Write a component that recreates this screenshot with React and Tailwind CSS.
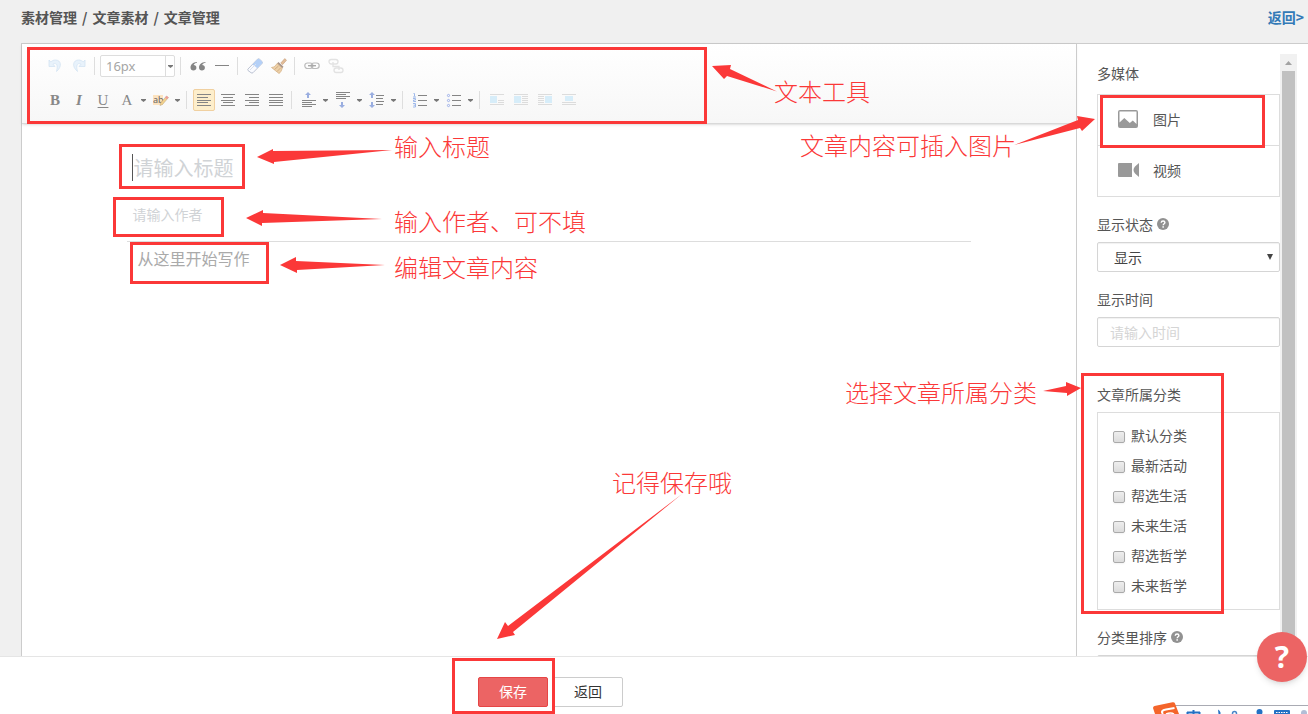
import { useState } from 'react';

const CATEGORIES = ['默认分类', '最新活动', '帮选生活', '未来生活', '帮选哲学', '未来哲学'];

const BOXES = [
  [27, 47, 680, 77],
  [119, 144, 126, 45],
  [113, 197, 111, 40],
  [130, 242, 139, 42],
  [1100, 95, 165, 53],
  [1081, 373, 143, 241],
  [452, 658, 103, 56],
];

const ARROWS = [
  '712,66 731,65 730,69 777,91.5 727,76 724,79',
  '257,157 273,149 273,151 392,150 274,162 274,164',
  '246,218 263,210 263,213 382,219 262,223 262,226',
  '280,265 296,257 296,261 385,265 297,270 297,273',
  '1095,119 1077,116 1078,120 1014,145 1080,128 1082,131',
  '1081,388 1066,382 1066,386 1043,391 1067,393 1067,396',
  '497,639 505,622 508,626 682,494 513,632 515,635',
];

const NOTES = [
  { text: '文本工具', pos: 'left-[774px] top-[75px]' },
  { text: '文章内容可插入图片', pos: 'left-[800px] top-[129px]' },
  { text: '输入标题', pos: 'left-[394px] top-[130px]' },
  { text: '输入作者、可不填', pos: 'left-[394px] top-[205px]' },
  { text: '编辑文章内容', pos: 'left-[394px] top-[251px]' },
  { text: '选择文章所属分类', pos: 'left-[845px] top-[376px]' },
  { text: '记得保存哦', pos: 'left-[612px] top-[466px]' },
];

function Icon({ children }) {
  return (
    <svg width="16" height="16" viewBox="0 0 16 16" fill="none" className="shrink-0">
      {children}
    </svg>
  );
}

// each line is [x, y, width]
function Lines({ rows, color = '#858585' }) {
  return rows.map(([x, y, w]) => <rect key={`${x}-${y}`} x={x} y={y} width={w} height="1" fill={color} />);
}

function Tool({ label, active, children }) {
  return (
    <button
      type="button"
      aria-label={label}
      title={label}
      className={`mx-px flex h-[22px] w-[22px] items-center justify-center rounded-xs border ${active ? 'border-[#f0d0a0] bg-[#fdeecb]' : 'border-transparent'}`}
    >
      {children}
    </button>
  );
}

function SplitTool({ label, children }) {
  return (
    <div className="flex w-[34px] items-center">
      <Tool label={label}>{children}</Tool>
      <button type="button" aria-label={`${label}选项`} className="flex h-[22px] w-2 items-center justify-center">
        <svg width="5" height="3" viewBox="0 0 5 3" className="shrink-0"><path d="M0 0h5v1L2.500 3L0 1z" fill="#777" /></svg>
      </button>
    </div>
  );
}

function Separator() {
  return <div className="ml-[3px] mr-[5px] h-[18px] w-px bg-[#dedede]" />;
}

function Letter({ children, className }) {
  return <span className={`font-['Liberation_Serif',serif] text-[15px] leading-4 text-[#888] ${className}`}>{children}</span>;
}

function UpArrow({ x = 6, y = 0 }) {
  return <path d={`M${x} ${y}l3 3h-2v3h-2v-3h-2z`} fill="#9aaee0" />;
}

function DownArrow({ x = 6, y = 16 }) {
  return <path d={`M${x} ${y}l3-3h-2v-3h-2v3h-2z`} fill="#9aaee0" />;
}

function Toolbar() {
  return (
    <div className="flex flex-col gap-3 border-b border-[#d9d9d9] bg-linear-to-b from-white to-[#f7f7f7] pt-[11px] pb-[12px] pl-[21px] shadow-sm">
      <div className="flex h-[22px] items-center">
        <Tool label="撤销">
          <Icon><path d="M2 2v6.500h6L6 6.300C9 4.300 11.500 6.500 9.500 13.500 15.500 8.500 14 2 8.500 2 6.500 2 5 2.800 3.800 4z" fill="#e8f2fb" stroke="#d3e3f2" strokeWidth=".8" /></Icon>
        </Tool>
        <Tool label="重做">
          <Icon><path d="M14 2v6.500H8L10 6.300C7 4.300 4.500 6.500 6.500 13.500.5 8.500 2 2 7.500 2c2 0 3.500.8 4.700 2z" fill="#e8f2fb" stroke="#d3e3f2" strokeWidth=".8" /></Icon>
        </Tool>
        <Separator />
        <button type="button" aria-label="字号" className="mr-[2px] flex h-[22px] w-[75px] items-stretch rounded-xs border border-[#ddd] bg-white">
          <span className="flex flex-1 items-center pt-px pl-[5px] font-['Noto_Sans',sans-serif] text-[13px] text-[#a5a5a5]">16px</span>
          <span className="flex w-[9px] items-center justify-center border-l border-[#ddd]">
            <svg width="5" height="3" viewBox="0 0 5 3" className="shrink-0"><path d="M0 0h5v1L2.500 3L0 1z" fill="#777" /></svg>
          </span>
        </button>
        <Separator />
        <Tool label="引用">
          <Icon>
            <path d="M7 4C3 4.300.5 6.500.5 9.500c0 1.800 1.200 3 2.900 3 1.700 0 3-1.100 3-2.800 0-1.600-1.100-2.600-2.800-2.600C4.200 5.900 5.300 5 7 4.700z" fill="#858585" />
            <path d="M15.500 4c-4 .3-6.500 2.500-6.500 5.500 0 1.800 1.200 3 2.900 3 1.700 0 3-1.100 3-2.800 0-1.600-1.100-2.600-2.800-2.600.6-1.200 1.700-2.100 3.400-2.400z" fill="#858585" />
          </Icon>
        </Tool>
        <Tool label="分隔线"><Icon><Lines rows={[[1, 7, 14]]} /></Icon></Tool>
        <Separator />
        <Tool label="清除格式">
          <Icon>
            <path d="M1 11L10.500 1.200Q11.500.5 12.500 1.200L15 3.500Q15.800 4.500 15 5.500L6 14.700Q5 15.500 4 14.700L1 12.500Q.4 11.700 1 11z" fill="#fafbff" stroke="#b4bccd" strokeWidth=".9" />
            <path d="M5.500 6.400L10.500 1.200Q11.500.5 12.500 1.200L15 3.500Q15.800 4.500 15 5.500L10.300 10.300z" fill="#b4d0f7" />
            <path d="M3 12l6-6" stroke="#dbe0ea" />
          </Icon>
        </Tool>
        <Tool label="格式刷">
          <Icon>
            <path d="M13.800.6L9.800 5l1.700 1.700L15.500 2.300z" fill="#e2bd98" stroke="#c79c78" strokeWidth=".6" />
            <path d="M7.500 4l5 4.700-1.300 1.500L6 5.500z" fill="#a9958a" />
            <path d="M6 5.500l5.200 4.700C10.500 13 9.500 14.500 8 15.500L.5 9.500C3 9.300 4.500 8 6 5.500z" fill="#edd0a8" stroke="#d2ad80" strokeWidth=".7" />
            <path d="M7.500 8L3.500 11.500M9.500 10L6 13.500" stroke="#c9a478" strokeWidth=".8" />
          </Icon>
        </Tool>
        <Separator />
        <Tool label="链接">
          <Icon>
            <rect x=".8" y="5" width="8" height="5.500" rx="2.700" stroke="#bbb" strokeWidth="1.200" />
            <rect x="7.200" y="5" width="8" height="5.500" rx="2.700" stroke="#bbb" strokeWidth="1.200" />
            <path d="M4 7.700h8" stroke="#aaa" strokeWidth="1.400" />
          </Icon>
        </Tool>
        <Tool label="取消链接">
          <Icon>
            <rect x="1" y="1.500" width="9" height="4.500" rx="2.200" stroke="#e2e2e2" strokeWidth="1.300" />
            <rect x="6" y="10" width="9" height="4.500" rx="2.200" stroke="#e2e2e2" strokeWidth="1.300" />
            <path d="M5 4v4.500h6V12" stroke="#e2e2e2" strokeWidth="1.300" />
          </Icon>
        </Tool>
      </div>
      <div className="flex h-[22px] items-center">
        <Tool label="加粗"><Letter className="font-bold">B</Letter></Tool>
        <Tool label="斜体"><Letter className="font-bold italic">I</Letter></Tool>
        <Tool label="下划线"><Letter className="underline underline-offset-2">U</Letter></Tool>
        <SplitTool label="字体颜色"><Letter>A</Letter></SplitTool>
        <SplitTool label="背景色">
          <Icon>
            <rect x="0" y="3" width="10" height="10" fill="#fce3c0" />
            <text x="0" y="11" fontSize="9" fontFamily="Noto Sans" fill="#666">ab</text>
            <path d="M13.500 4l2 1.500-6 7-2.500 1 .6-2.500z" fill="#f3d28d" stroke="#b9a37a" strokeWidth=".5" />
            <path d="M13.500 4l2 1.500-1.500 1.800-2-1.500z" fill="#ee9b9b" />
          </Icon>
        </SplitTool>
        <Separator />
        <Tool label="左对齐" active><Icon><Lines rows={[[1, 2, 14], [1, 5, 11], [1, 8, 14], [1, 10, 11], [1, 13, 14]]} /></Icon></Tool>
        <Tool label="居中"><Icon><Lines rows={[[1, 2, 14], [3, 5, 10], [1, 8, 14], [3, 10, 10], [1, 13, 14]]} /></Icon></Tool>
        <Tool label="右对齐"><Icon><Lines rows={[[1, 2, 14], [5, 5, 10], [1, 8, 14], [5, 10, 10], [1, 13, 14]]} /></Icon></Tool>
        <Tool label="两端对齐"><Icon><Lines rows={[[1, 2, 14], [1, 5, 14], [1, 8, 14], [1, 10, 14], [1, 13, 14]]} /></Icon></Tool>
        <Separator />
        <SplitTool label="段前距"><Icon><UpArrow x={7} /><Lines rows={[[1, 8, 14], [1, 10, 10], [1, 12, 14], [1, 14, 10]]} /></Icon></SplitTool>
        <SplitTool label="段后距"><Icon><Lines rows={[[1, 0, 14], [1, 2, 10], [1, 4, 14], [1, 6, 10]]} /><DownArrow x={7} /></Icon></SplitTool>
        <SplitTool label="行间距"><Icon><UpArrow x={3} /><DownArrow x={3} /><Lines rows={[[7, 3, 8], [7, 6, 7], [7, 9, 8], [7, 12, 7]]} /></Icon></SplitTool>
        <Separator />
        <SplitTool label="有序列表">
          <Icon>
            <path d="M1.500 1.500h1v3M1 5h3M1 6.500h2.500v1.500h-2v1.500h2.500M1 11.500h2.500v3.500h-2.500M1.500 13.200h2" stroke="#9db8ea" />
            <Lines rows={[[6, 3, 9], [6, 8, 9], [6, 13, 9]]} />
          </Icon>
        </SplitTool>
        <SplitTool label="无序列表">
          <Icon>
            <g stroke="#9db0ea"><circle cx="2.500" cy="3.500" r="1.100" /><circle cx="2.500" cy="8.500" r="1.100" /><circle cx="2.500" cy="13.500" r="1.100" /></g>
            <Lines rows={[[6, 3, 9], [6, 8, 9], [6, 13, 9]]} />
          </Icon>
        </SplitTool>
        <Separator />
        <Tool label="图片默认"><Icon><rect x="1" y="4" width="7" height="7" fill="#d7edf9" /><Lines color="#dcdcdc" rows={[[1, 2, 14], [9, 8, 6], [9, 10, 6], [1, 12, 14]]} /></Icon></Tool>
        <Tool label="图片左浮动"><Icon><rect x="1" y="4" width="7" height="7" fill="#d7edf9" /><Lines color="#dcdcdc" rows={[[1, 2, 14], [9, 4, 6], [9, 6, 6], [9, 8, 6], [9, 10, 6], [1, 12, 14]]} /></Icon></Tool>
        <Tool label="图片右浮动"><Icon><rect x="8" y="4" width="7" height="7" fill="#d7edf9" /><Lines color="#dcdcdc" rows={[[1, 2, 14], [1, 4, 6], [1, 6, 6], [1, 8, 6], [1, 10, 6], [1, 12, 14]]} /></Icon></Tool>
        <Tool label="图片居中"><Icon><rect x="4" y="4" width="8" height="5" fill="#d7edf9" /><Lines color="#dcdcdc" rows={[[1, 2, 14], [1, 10, 14], [1, 12, 14]]} /></Icon></Tool>
      </div>
    </div>
  );
}

function Editor() {
  return (
    <section className="min-w-0 flex-1">
      <Toolbar />
      <div className="mx-auto w-4/5">
        <div className="border-b border-[#ddd] pt-7 pb-3 pl-[5px]">
          <div className="flex items-center">
            <div className="h-[27px] w-px bg-[#555]" />
            <input aria-label="标题" placeholder="请输入标题" className="h-[30px] flex-1 text-xl outline-none placeholder:text-[#d0d3d6]" />
          </div>
          <input aria-label="作者" placeholder="请输入作者" className="mt-[17px] block h-[30px] w-full text-sm outline-none placeholder:text-[#d0d3d6]" />
        </div>
        <textarea aria-label="正文" placeholder="从这里开始写作" className="mt-1 block h-40 w-full resize-none pl-[10px] text-base leading-6 outline-none placeholder:text-[#aaa]" />
      </div>
    </section>
  );
}

function HelpDot() {
  return (
    <svg width="12" height="12" viewBox="0 0 12 12" className="shrink-0">
      <circle cx="6" cy="6" r="6" fill="#919191" />
      <path d="M4.200 4.700C4.300 3.500 5 3 6.100 3c1.100 0 1.800.6 1.800 1.500C7.900 5.700 6.200 5.700 6.200 7.200" fill="none" stroke="#fff" strokeWidth="1.400" />
      <rect x="5.400" y="8.200" width="1.500" height="1.500" fill="#fff" />
    </svg>
  );
}

function Sidebar() {
  const [checked, setChecked] = useState([]);
  const toggle = (name) => setChecked((list) => (list.includes(name) ? list.filter((n) => n !== name) : [...list, name]));

  return (
    <aside className="flex w-[232px] shrink-0 border-l border-[#ccc] pr-[11px] pl-5">
      <div className="min-w-0 flex-1 overflow-hidden pt-[19px] text-sm leading-5 text-[#555]">
        <h2>多媒体</h2>
        <div className="mt-[11px] divide-y divide-[#ddd] border border-[#ddd]">
          <button type="button" className="flex h-[51px] w-full items-center gap-[15px] pb-0.5 pl-5">
            <svg width="20" height="18" viewBox="0 0 20 18">
              <path fillRule="evenodd" d="M2 0h16q2 0 2 2v14q0 2-2 2H2q-2 0-2-2V2q0-2 2-2zM1.500 1.500v11L6.300 8l5.500 5 3-2.500 3.700 3.500V1.500z" fill="#999" />
            </svg>
            图片
          </button>
          <button type="button" className="flex h-[50px] w-full items-center gap-[14px] pb-0.5 pl-5">
            <svg width="21" height="14" viewBox="0 0 21 14">
              <path d="M1 0h13v14H1q-1 0-1-1V1q0-1 1-1zM21 0v14l-4-3.500q-3-3.500 0-7z" fill="#999" />
            </svg>
            视频
          </button>
        </div>
        <div className="mt-[17px] flex items-center gap-1">
          <label htmlFor="status">显示状态</label>
          <HelpDot />
        </div>
        <div className="relative mt-2">
          <select id="status" className="h-[30px] w-full appearance-none rounded-xs border border-[#d5d5d5] bg-white pl-4 text-sm text-[#444] shadow-[inset_0_1px_1px_rgba(0,0,0,0.06)]">
            <option>显示</option>
            <option>隐藏</option>
          </select>
          <svg width="6" height="6" viewBox="0 0 6 6" className="pointer-events-none absolute top-3 right-[7px]"><path d="M0 0h6L3 6z" fill="#444" /></svg>
        </div>
        <label htmlFor="time" className="mt-[17px] block">显示时间</label>
        <input id="time" placeholder="请输入时间" className="mt-2 block h-[30px] w-full rounded-xs border border-[#d5d5d5] pl-3 text-sm shadow-[inset_0_1px_1px_rgba(0,0,0,0.06)] placeholder:text-[#d5d5d5]" />
        <h2 className="mt-[37px]">文章所属分类</h2>
        <div className="mt-2 border border-[#ddd] pt-[7px] pb-[9px] pl-[15px]">
          {CATEGORIES.map((name) => (
            <label key={name} className="flex h-[30px] items-center gap-[6px]">
              <input
                type="checkbox"
                checked={checked.includes(name)}
                onChange={() => toggle(name)}
                className="mt-[3px] h-3 w-3 appearance-none rounded-xs border border-[#aaa] bg-linear-to-b from-[#eee] to-[#dcdcdc] shadow-xs checked:bg-[#777]"
              />
              {name}
            </label>
          ))}
        </div>
        <div className="mt-[17px] flex items-center gap-1">
          <label htmlFor="order">分类里排序</label>
          <HelpDot />
        </div>
        <input id="order" className="mt-2 block h-[30px] w-full rounded-xs border border-[#d5d5d5]" />
      </div>
      <div className="mt-[10px] flex w-[17px] flex-col items-center bg-[#f1f1f1]">
        <div className="flex h-[17px] shrink-0 items-center">
          <svg width="7" height="4" viewBox="0 0 7 4"><path d="M3.500 0L7 4H0z" fill="#a3a3a3" /></svg>
        </div>
        <div className="w-[13px] flex-1 bg-[#c1c1c1]" />
      </div>
    </aside>
  );
}

function InputMethodBar() {
  return (
    <svg width="156" height="12" viewBox="0 0 156 12" className="absolute right-0 bottom-0">
      <path d="M22 12V3.500H156V12z" fill="#fff" />
      <path d="M22 3.500H156" stroke="#a9abb3" />
      <path d="M1 6Q1 4.500 2.500 4L20.500.3Q22.500 0 23 1.500L27 12H3z" fill="#f4652b" />
      <path d="M11 12Q8 8.500 14 7.500L22.500 6" fill="none" stroke="#fff" strokeWidth="2" />
      <path d="M14 12Q19 10 22 12" fill="none" stroke="#fff" strokeWidth="1.500" />
      <path d="M35 10.500H48M41.500 8V12M35.500 10V12M47.500 10V12" stroke="#2471c4" strokeWidth="2" fill="none" />
      <path d="M66 7.500q3 2 2.500 4.500h-2z" fill="#2471c4" />
      <circle cx="82.500" cy="11.500" r="2" fill="none" stroke="#4a86c8" strokeWidth="1.500" />
      <circle cx="107.500" cy="10" r="3" fill="#2471c4" />
      <rect x="122" y="8" width="16" height="5" rx="1" fill="#2471c4" />
      <path d="M124 10.500H136" stroke="#fff" strokeDasharray="1.500 1" />
      <circle cx="152" cy="11" r="3" fill="#b3bdd6" />
    </svg>
  );
}

function Annotations() {
  return (
    <div className="pointer-events-none absolute inset-0 overflow-hidden text-[#fb3838]">
      <svg width="100%" height="100%" className="absolute inset-0">
        {BOXES.map(([x, y, w, h]) => (
          <rect key={`${x}-${y}`} x={x + 1.5} y={y + 1.5} width={w - 3} height={h - 3} fill="none" stroke="currentColor" strokeWidth="3" />
        ))}
        {ARROWS.map((points) => <polygon key={points} points={points} fill="currentColor" />)}
      </svg>
      {NOTES.map(({ text, pos }) => (
        <span key={text} className={`absolute text-2xl font-light whitespace-nowrap ${pos}`}>{text}</span>
      ))}
    </div>
  );
}

export default function App() {
  return (
    <div className="relative flex h-screen flex-col overflow-hidden bg-[#f0f0f0] font-['Noto_Sans_CJK_SC',sans-serif] text-[#555]">
      <header className="flex h-[43px] shrink-0 items-center justify-between pr-1 pb-[9px] pl-[21px] text-sm font-bold">
        <nav className="flex gap-[5px]">
          <span>素材管理</span><span>/</span><span>文章素材</span><span>/</span><span>文章管理</span>
        </nav>
        <a href="#back" className="text-[#337ab7]">返回&gt;</a>
      </header>
      <main className="ml-[21px] flex min-h-0 flex-1 border-t border-l border-[#ccc] bg-white">
        <Editor />
        <Sidebar />
      </main>
      <footer className="flex h-[58px] shrink-0 items-center justify-center gap-[5px] border-t border-[#e5e5e5] bg-white pt-3 pr-[207px] text-sm">
        <button type="button" className="h-[30px] w-[70px] rounded-xs border border-[#e64545] bg-[#ec6464] pb-0.5 text-white">保存</button>
        <button type="button" className="h-[30px] w-[70px] rounded-xs border border-[#ccc] bg-white pb-0.5 text-[#333]">返回</button>
      </footer>
      <InputMethodBar />
      <Annotations />
      <button type="button" aria-label="帮助" className="absolute right-px bottom-8 flex h-[50px] w-[50px] items-center justify-center rounded-full bg-[#ec6464] font-['Open_Sans',sans-serif] text-3xl font-bold text-white shadow-md">
        ?
      </button>
    </div>
  );
}
